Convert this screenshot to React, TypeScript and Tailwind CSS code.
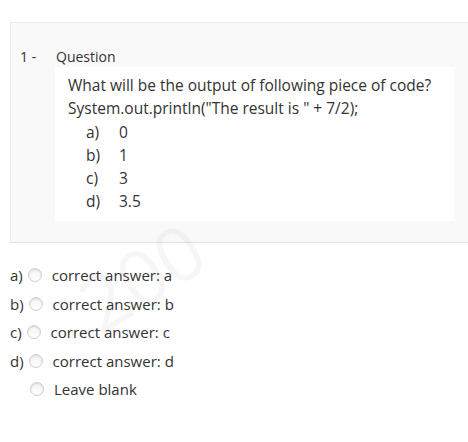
import React from "react";

function Radio() {
  return (
    <span className="inline-block w-[14px] h-[14px] rounded-full border border-[#cfcfcf] bg-gradient-to-b from-[#f4f4f4] to-[#ffffff] shadow-[inset_0_1px_2px_rgba(0,0,0,0.12)] shrink-0" />
  );
}

const answers = [
  { l: "a)", t: "correct answer: a" },
  { l: "b)", t: "correct answer: b" },
  { l: "c)", t: "correct answer: c" },
  { l: "d)", t: "correct answer: d" },
];

export default function App() {
  const q = "font-['Open_Sans',sans-serif] text-[15.5px] leading-[23.3px] text-[#333]";
  return (
    <div className="relative w-[468px] h-[442px] bg-white overflow-hidden font-['Open_Sans',sans-serif] text-[#333]">
      <div className="relative ml-[10px] mt-[22px] h-[221px] border border-r-0 border-[#ebebeb] border-b-[#e0e0e0] bg-[#f9f9f9] pt-[23px]">
        <div className="flex items-center h-[20px] text-[14px] pl-[9px]">
          <span className="w-[36px]">1 -</span>
          <span>Question</span>
        </div>
        <div className={`ml-[44px] mt-[1px] w-[399px] h-[154px] bg-white pl-[13px] pt-[7px] ${q}`}>
          <div className="whitespace-nowrap">What will be the output of following piece of code?</div>
          <div className="whitespace-nowrap">System.out.println("The result is " + 7/2);</div>
          {[
            ["a)", "0"],
            ["b)", "1"],
            ["c)", "3"],
            ["d)", "3.5"],
          ].map(([a, b]) => (
            <div key={a} className="flex pl-[18px]">
              <span className="w-[33px]">{a}</span>
              <span>{b}</span>
            </div>
          ))}
        </div>
      </div>
      <div className="relative mt-[18px] text-[15px]">
        {answers.map((a) => (
          <div key={a.l} className="flex items-center h-[28.5px] pl-[10px]">
            <span>{a.l}</span>
            <span className="ml-[5px] flex"><Radio /></span>
            <span className="ml-[10px]">{a.t}</span>
          </div>
        ))}
        <div className="flex items-center h-[28.5px] pl-[30px]">
          <Radio />
          <span className="ml-[10px]">Leave blank</span>
        </div>
      </div>
      <div className="pointer-events-none absolute left-[76px] top-[238px] rotate-[-32deg] text-[76px] leading-none font-['Open_Sans',sans-serif] text-[rgba(0,0,0,0.035)] select-none">
        200
      </div>
    </div>
  );
}
